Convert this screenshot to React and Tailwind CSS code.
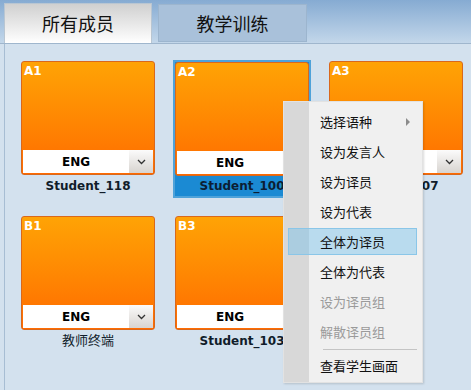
import React from "react";

const cards = [
    { id: "A1", name: "Student_118" },
    { id: "A2", name: "Student_100", selected: true },
    { id: "A3", name: "Student_107" },
    { id: "B1", name: "教师终端" },
    { id: "B3", name: "Student_103" },
];

const menuItems = [
    { label: "选择语种", sub: true },
    { label: "设为发言人" },
    { label: "设为译员" },
    { label: "设为代表" },
    { label: "全体为译员", active: true },
    { label: "全体为代表" },
    { label: "设为译员组", disabled: true },
    { label: "解散译员组", disabled: true },
];

function Chevron() {
    return (
        <svg width="9" height="6" viewBox="0 0 9 6">
            <path d="M1 1 L4.5 4.5 L8 1" fill="none" stroke="#333" strokeWidth="1.3" />
        </svg>
    );
}

function Card({ card }) {
    const face = (
        <div className="h-[114px] rounded-[3px] border border-[#d9681c] bg-gradient-to-b from-[#ffa305] to-[#ff6a00] flex flex-col">
            <div className="flex-1 px-[2px] pt-[3px] text-[12px] font-bold text-white leading-none">{card.id}</div>
            <div className="mx-[1px] mb-[1px] h-[23px] flex">
                <div className="flex-1 bg-white flex items-center justify-center text-[12px] font-bold text-black">ENG</div>
                <div className="w-[24px] bg-gradient-to-b from-[#fbfbfb] to-[#d8d4d0] flex items-center justify-center">
                    <Chevron />
                </div>
            </div>
        </div>
    );
    const cjk = /[\u4e00-\u9fff]/.test(card.name);
    if (card.selected) {
        return (
            <div className="-mx-[2px] -mt-[1px] border-2 border-[#4ea2d9] bg-[#1b8ad3]">
                {face}
                <div className="h-[20px] flex items-center justify-center text-[12px] font-bold text-[#0c1e33]">{card.name}</div>
            </div>
        );
    }
    return (
        <div>
            {face}
            <div className={"h-[22px] flex items-center justify-center text-[#101c2a] " + (cjk ? "text-[13px]" : "text-[12px] font-bold")}>
                {card.name}
            </div>
        </div>
    );
}

export default function App() {
    return (
        <div
            className="relative w-[471px] h-[390px] overflow-hidden bg-[#d3e1ee]"
            style={{ fontFamily: '"DejaVu Sans", "Noto Sans CJK SC", sans-serif' }}
        >
            <div className="h-[44px] bg-gradient-to-b from-[#86abd2] to-[#c3d7ea] border-b border-[#9fb6cd] flex items-end pl-[4px] gap-[6px]">
                <div className="w-[148px] h-[40px] bg-gradient-to-b from-[#d0d0d0] to-[#ffffff] border border-b-0 border-[#b9c6d2] flex items-center justify-center text-[18px] text-[#111]" style={{ fontFamily: '"Noto Sans CJK SC", sans-serif' }}>
                    所有成员
                </div>
                <div className="w-[149px] h-[38px] mb-[1px] bg-[#a9c1da] border border-[#9cb5ce] flex items-center justify-center text-[18px] text-[#111]" style={{ fontFamily: '"Noto Sans CJK SC", sans-serif' }}>
                    教学训练
                </div>
            </div>

            <div className="ml-[4px] h-[346px] border-l border-[#a7bdd3] pl-[16px] pt-[17px]">
                <div className="grid grid-cols-[134px_134px_134px] gap-x-[20px] gap-y-[18px]">
                    {cards.map((c) => (
                        <Card key={c.id} card={c} />
                    ))}
                </div>
            </div>

            <div
                className="absolute left-[283px] top-[101px] w-[140px] h-[282px] bg-[#f0f0f0] border border-[#e2e2e2] shadow-[1px_1px_2px_rgba(0,0,0,0.15)] pt-[5px]"
                style={{ fontFamily: '"Noto Sans CJK SC", sans-serif' }}
            >
                <div className="absolute left-0 top-0 bottom-0 w-[25px] bg-[#d8d8d8]" />
                <div className="relative">
                    {menuItems.map((m) => (
                        <div key={m.label} className="h-[30px] flex items-center relative">
                            {m.active && (
                                <div className="absolute left-[4px] right-[5px] top-[1px] bottom-[2px] border border-[#8ac6e8] bg-[rgba(110,190,235,0.42)]" />
                            )}
                            <span className={"relative pl-[36px] text-[13px] " + (m.disabled ? "text-[#9a9a9a]" : "text-[#111]")}>
                                {m.label}
                            </span>
                            {m.sub && (
                                <svg className="absolute right-[11px]" width="5" height="8" viewBox="0 0 5 8">
                                    <path d="M0 0 L4 4 L0 8 Z" fill="#8c8c8c" />
                                </svg>
                            )}
                        </div>
                    ))}
                    <div className="h-[4px] flex items-center pl-[39px] pr-[5px]">
                        <div className="h-px w-full bg-[#c4c4c4]" />
                    </div>
                    <div className="h-[30px] flex items-center">
                        <span className="relative pl-[36px] text-[13px] text-[#111]">查看学生画面</span>
                    </div>
                </div>
            </div>
        </div>
    );
}
